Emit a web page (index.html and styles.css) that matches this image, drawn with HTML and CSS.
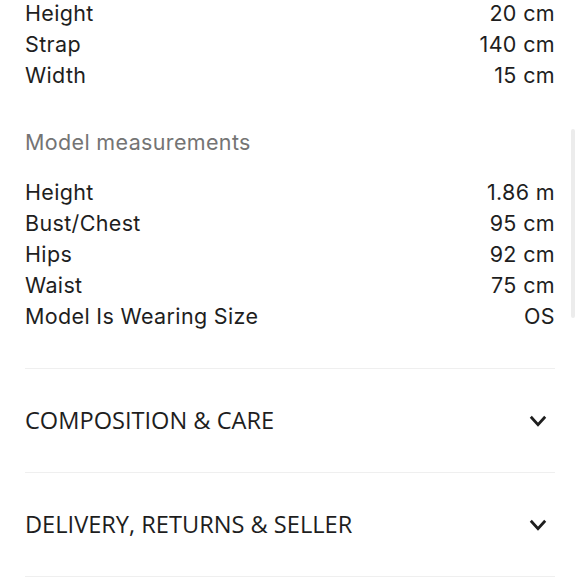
FILE: index.html
```html
<!DOCTYPE html>
<html lang="en">
  <head>
    <meta charset="UTF-8" />
    <meta name="viewport" content="width=device-width, initial-scale=1.0" />
    <title>Size &amp; fit</title>
    <link rel="stylesheet" href="styles.css">
  </head>
  <body>
    <div class="panel">
      <dl class="specs">
        <div class="row"><dt>Height</dt><dd>20 cm</dd></div>
        <div class="row"><dt>Strap</dt><dd>140 cm</dd></div>
        <div class="row"><dt>Width</dt><dd>15 cm</dd></div>
      </dl>

      <h3 class="subtitle">Model measurements</h3>

      <dl class="specs">
        <div class="row"><dt>Height</dt><dd>1.86 m</dd></div>
        <div class="row"><dt>Bust/Chest</dt><dd>95 cm</dd></div>
        <div class="row"><dt>Hips</dt><dd>92 cm</dd></div>
        <div class="row"><dt>Waist</dt><dd>75 cm</dd></div>
        <div class="row"><dt>Model Is Wearing Size</dt><dd>OS</dd></div>
      </dl>

      <div class="accordion">
        <button class="toggle">
          <span>COMPOSITION &amp; CARE</span>
          <svg class="chevron" viewBox="0 0 18 12" width="18" height="12">
            <path d="M1.8 1.8 L9 9.6 L16.2 1.8" />
          </svg>
        </button>
        <button class="toggle">
          <span>DELIVERY, RETURNS &amp; SELLER</span>
          <svg class="chevron" viewBox="0 0 18 12" width="18" height="12">
            <path d="M1.8 1.8 L9 9.6 L16.2 1.8" />
          </svg>
        </button>
      </div>
    </div>

    <div class="scrollbar"></div>
  </body>
</html>
```

FILE: styles.css
```css
:root {
  --text-color: #1e1e1e;
  --muted-color: #747474;
  --line-color: #efefef;
}

* {
  box-sizing: border-box;
}

body {
  margin: 0;
  background: #fff;
  color: var(--text-color);
  font-family: Inter, "Liberation Sans", sans-serif;
}

.panel {
  padding: 0 25px;
  margin-top: -2px;
}

.specs {
  margin: 0;
}

.row {
  display: flex;
  justify-content: space-between;
  font-size: 21.5px;
  line-height: 31px;
  letter-spacing: 0.35px;
}

.row dt,
.row dd {
  margin: 0;
}

.subtitle {
  margin: 36px 0 19px;
  font-size: 21.5px;
  line-height: 31px;
  letter-spacing: 0.35px;
  font-weight: normal;
  color: var(--muted-color);
}

.accordion {
  margin-top: 36px;
  border-top: 1px solid var(--line-color);
}

.toggle {
  display: flex;
  width: 100%;
  height: 104px;
  align-items: center;
  justify-content: space-between;
  padding: 0 8px 0 0;
  background: none;
  border: none;
  border-bottom: 1px solid var(--line-color);
  font-family: "Open Sans", "Liberation Sans", sans-serif;
  font-size: 23.6px;
  line-height: 1.2;
  color: var(--text-color);
  text-align: left;
  cursor: pointer;
}

.chevron path {
  fill: none;
  stroke: #1e1e1e;
  stroke-width: 2.8;
}

.scrollbar {
  position: fixed;
  top: 129px;
  right: 5px;
  width: 4px;
  height: 189px;
  border-radius: 2px;
  background: #ececec;
}
```
